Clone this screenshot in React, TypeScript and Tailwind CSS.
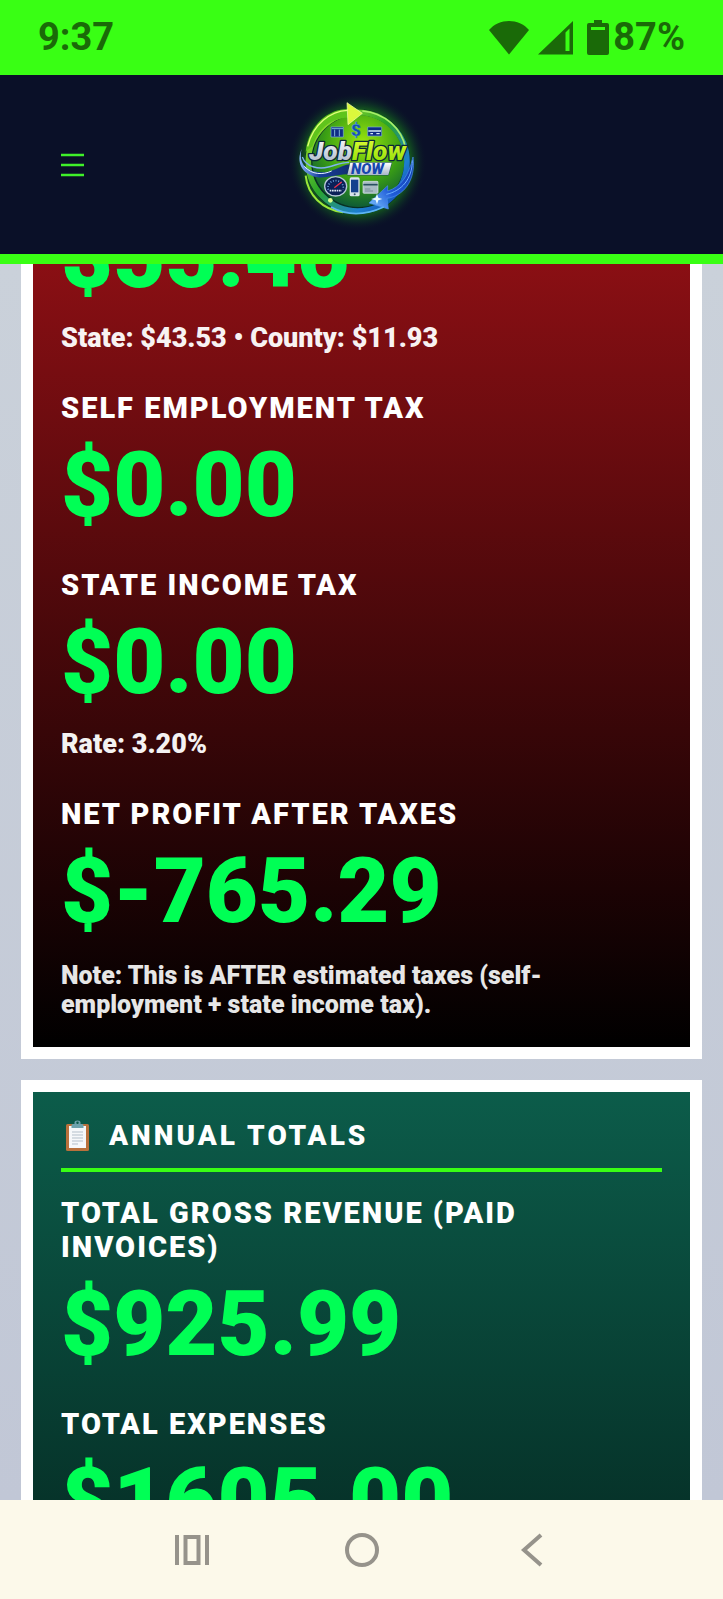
import type { ReactNode } from 'react';

type StatProps = {
  label?: string;
  value: string;
  children?: ReactNode;
};

const Stat = ({ label, value, children }: StatProps) => {
  return (
    <div>
      {label && <h3 className="mb-4 text-[29px] leading-[34px] tracking-[2px] uppercase">{label}</h3>}
      <p className="text-[90px] leading-[90px] text-[#00ff55]">{value}</p>
      {children}
    </div>
  );
};

const StatusBar = () => {
  return (
    <div className="flex h-[75px] shrink-0 items-center justify-between bg-[#39ff14] px-[38px] text-[38px] font-bold text-[#1a6a08]">
      <time>9:37</time>
      <div className="flex items-center">
        <svg className="mr-2 h-9 w-[42px]" viewBox="0 0 42 36" fill="currentColor" aria-hidden="true">
          <path d="M1 10C11-2 31-2 41 10L21 34.500Z" />
        </svg>
        <svg className="mr-3.5 h-9 w-[35px]" viewBox="0 0 35 36" aria-hidden="true">
          <path fill="currentColor" fillRule="evenodd" d="M0 34.500L35 1V34.500ZM27.500 12.500V31H31.500V8.500Z" />
        </svg>
        <svg className="mr-1 h-9 w-[22px]" viewBox="0 0 22 36" aria-hidden="true">
          <path
            fill="currentColor"
            fillRule="evenodd"
            d="M7 0H15V3H20Q22 3 22 5V33Q22 35 20 35H2Q0 35 0 33V5Q0 3 2 3H7ZM4 7V10H18V7Z"
          />
        </svg>
        <span>87%</span>
      </div>
    </div>
  );
};

const Logo = () => {
  return (
    <svg className="size-40" viewBox="4 0 480 480" role="img" aria-label="JobFlow Now">
      <defs>
        <radialGradient id="glow">
          <stop offset="0.7" stopColor="#1f9a12" stopOpacity="0.75" />
          <stop offset="0.85" stopColor="#126020" stopOpacity="0.35" />
          <stop offset="1" stopColor="#0a1028" stopOpacity="0" />
        </radialGradient>
        <radialGradient id="disc" cx="0.55" cy="0.3" r="0.75">
          <stop offset="0" stopColor="#9ae60c" />
          <stop offset="0.55" stopColor="#3ba014" />
          <stop offset="1" stopColor="#07503a" />
        </radialGradient>
        <linearGradient id="ring" x1="0" y1="0" x2="1" y2="1">
          <stop offset="0" stopColor="#b8f02a" />
          <stop offset="0.45" stopColor="#2aa52a" />
          <stop offset="0.75" stopColor="#1d7fd0" />
          <stop offset="1" stopColor="#1237a8" />
        </linearGradient>
        <linearGradient id="silver" x1="0" y1="0" x2="0" y2="1">
          <stop offset="0" stopColor="#ffffff" />
          <stop offset="1" stopColor="#a9b6c8" />
        </linearGradient>
        <linearGradient id="lime" x1="0" y1="0" x2="0" y2="1">
          <stop offset="0" stopColor="#e8ff3a" />
          <stop offset="1" stopColor="#86dc00" />
        </linearGradient>
        <linearGradient id="swoosh" x1="0" y1="0" x2="1" y2="0">
          <stop offset="0" stopColor="#8ab8ff" />
          <stop offset="0.4" stopColor="#173c9c" />
          <stop offset="1" stopColor="#123070" />
        </linearGradient>
        <linearGradient id="arrow" x1="1" y1="0" x2="0" y2="1">
          <stop offset="0" stopColor="#1038a8" />
          <stop offset="0.6" stopColor="#1f5cd8" />
          <stop offset="1" stopColor="#7ec4ff" />
        </linearGradient>
      </defs>
      <circle cx="234" cy="230" r="208" fill="url(#glow)" />
      <circle cx="234" cy="230" r="158" fill="#073022" />
      <circle cx="236" cy="228" r="138" fill="url(#disc)" />
      <circle cx="234" cy="230" r="148" fill="none" stroke="url(#ring)" strokeWidth="17" />
      <path d="M78 200C88 116 150 70 208 72L206 98C154 98 116 130 98 184Z" fill="#5fc41c" />
      <path d="M84 184C100 118 152 78 204 76" fill="none" stroke="#e2ff7a" strokeWidth="4" />
      <path d="M202 53L248 85L205 119Z" fill="#dcf93c" stroke="#f6ffb0" strokeWidth="2" />
      <path d="M248 78C316 84 366 130 378 190" fill="none" stroke="#a9ee6a" strokeWidth="5" />
      <path d="M78 272C84 330 128 374 190 382" fill="none" stroke="#9be83a" strokeWidth="6" />
      <circle cx="152" cy="346" r="7" fill="#dcff8c" />

      {/* top icons */}
      <g fill="#0e2c86" stroke="#7fb4d8" strokeWidth="2">
        <path d="M154 126H191V156H154Z" />
        <path d="M264 126H306V153H264Z" />
      </g>
      <path d="M165 134V154M179 134V154M156 131H190" stroke="#7fb4d8" strokeWidth="3" />
      <path d="M266 138H304M272 146H280M290 146H300" stroke="#d3e8f4" strokeWidth="4" />
      <text x="214" y="153" fontFamily="Roboto, sans-serif" fontWeight="900" fontSize="52" fill="#1450b4" stroke="#5aa8dc" strokeWidth="1">
        $
      </text>

      {/* wave behind the wordmark */}
      <path d="M66 192C54 240 86 264 136 262C164 260 184 240 210 238L204 268C160 270 136 282 110 276C68 268 48 232 66 192Z" fill="url(#swoosh)" />
      <path d="M68 216C78 246 118 254 146 246C170 240 184 232 208 232" fill="none" stroke="#7fb2f4" strokeWidth="4" />
      <path d="M74 244C96 270 130 270 156 258" fill="none" stroke="#e4f0ff" strokeWidth="3" />

      <g fontFamily="Roboto, sans-serif" fontWeight="900" fontStyle="italic" paintOrder="stroke" strokeLinejoin="round">
        <text x="88" y="224" fontSize="79" stroke="#0a2838" strokeWidth="8">
          <tspan fill="url(#silver)">Job</tspan>
          <tspan fill="url(#lime)">Flow</tspan>
        </text>
        <path d="M212 233H336L326 270H203Z" fill="url(#silver)" stroke="#12306e" strokeWidth="2" />
        <text x="214" y="267" fontSize="45" fill="#1747ae">
          NOW
        </text>
      </g>

      {/* blue arrow */}
      <path d="M400 216C410 290 368 334 322 340L326 372L268 354L324 302V318C364 306 388 270 400 216Z" fill="url(#arrow)" stroke="#4a90f0" strokeWidth="2" />
      <path d="M398 226C398 282 366 318 320 328" fill="none" stroke="#6cb0ff" strokeWidth="3" />
      <path d="M154 366C208 396 264 388 312 366" fill="none" stroke="#5db5f4" strokeWidth="5" />
      <path d="M292 326L296 338L308 342L296 346L292 358L288 346L274 342L288 338Z" fill="#e8fbff" />

      {/* gauge, phone, card */}
      <ellipse cx="168" cy="304" rx="33" ry="29" fill="#0b2158" stroke="#b8c8d8" strokeWidth="4" />
      <path d="M146 314A23 21 0 1 1 190 314" fill="none" stroke="#6c9ed8" strokeWidth="5" strokeDasharray="3 5" />
      <path d="M164 308L186 291" stroke="#f0304a" strokeWidth="4" />
      <path d="M150 317H186" stroke="#dce8f4" strokeWidth="5" strokeDasharray="5 2" />
      <rect x="210" y="277" width="30" height="57" rx="5" fill="#d8e2ea" />
      <rect x="214" y="284" width="22" height="38" fill="#15418e" />
      <circle cx="225" cy="328" r="3" fill="#3a5570" />
      <rect x="250" y="289" width="45" height="36" rx="3" fill="#a9bcc4" stroke="#e0eaf0" strokeWidth="2" />
      <path d="M251 299H294" stroke="#285060" strokeWidth="5" />
      <path d="M256 312H272M256 318H280" stroke="#5f7a84" strokeWidth="2" />
    </svg>
  );
};

const Header = () => {
  return (
    <header className="grid h-[189px] shrink-0 grid-cols-3 items-center border-b-10 border-[#39ff14] bg-[#0a1028] px-[61px]">
      <button type="button" aria-label="Open menu" className="justify-self-start text-[#3ff02a]">
        <svg className="h-6 w-6" viewBox="0 0 24 24" stroke="currentColor" strokeWidth="2.500" aria-hidden="true">
          <path d="M0 2H23M0 12H23M0 22H23" />
        </svg>
      </button>
      <a href="#home" className="justify-self-center">
        <Logo />
      </a>
    </header>
  );
};

const ClipboardIcon = () => {
  return (
    <svg className="h-8 w-8" viewBox="0 0 32 32" aria-hidden="true">
      <rect x="5" y="4" width="23" height="27" rx="1.500" fill="#b9713c" />
      <path d="M8 6H25V28H8Z" fill="#f6f8fa" />
      <path d="M11 12H22M11 15H22M11 18H22M11 21H22M11 24H17" stroke="#b3bfca" strokeWidth="1" />
      <path d="M10.500 8V5.500Q10.500 4 12 4H13.500V2.500Q13.500 0.500 16.500 0.500T19.500 2.500V4H21Q22.500 4 22.500 5.500V8Z" fill="#6fa3ad" />
      <circle cx="16.500" cy="2.800" r="1.200" fill="#0c5c4a" />
    </svg>
  );
};

const NavBar = () => {
  return (
    <nav className="grid h-[99px] shrink-0 grid-cols-[1fr_170px_170px_170px_1fr] place-items-center bg-[#fcf9ea] text-[#96938b]">
      <button type="button" aria-label="Recent apps" className="col-start-2">
        <svg className="h-10 w-[34px]" viewBox="0 0 34 40" fill="none" stroke="currentColor" strokeWidth="4" aria-hidden="true">
          <path d="M2 5V35M32 5V35M10.500 7H23.500V33H10.500Z" />
        </svg>
      </button>
      <button type="button" aria-label="Home">
        <svg className="h-10 w-[34px]" viewBox="0 0 34 40" fill="none" stroke="currentColor" strokeWidth="4" aria-hidden="true">
          <circle cx="17" cy="20" r="15" />
        </svg>
      </button>
      <button type="button" aria-label="Back">
        <svg className="h-10 w-[34px]" viewBox="0 0 34 40" fill="none" stroke="currentColor" strokeWidth="4" aria-hidden="true">
          <path d="M26 5L9 20L26 35" />
        </svg>
      </button>
    </nav>
  );
};

const App = () => {
  return (
    <div className="flex h-screen flex-col overflow-hidden font-['Roboto',sans-serif]">
      <StatusBar />
      <Header />
      <main className="flex min-h-0 flex-1 flex-col gap-[21px] overflow-hidden bg-linear-to-b/srgb from-[#cad1da] to-[#c1c7d6] px-[21px] font-black text-white">
        <section className="-mt-[52px] flex shrink-0 flex-col gap-[37px] border-12 border-t-0 border-white bg-linear-to-b/srgb from-[#931015] to-black px-7 pb-7">
          <Stat value="$55.46">
            <p className="mt-5 text-[27px] leading-8 opacity-95">State: $43.53 • County: $11.93</p>
          </Stat>
          <Stat label="Self Employment Tax" value="$0.00" />
          <Stat label="State Income Tax" value="$0.00">
            <p className="mt-5 text-[27px] leading-8 opacity-95">Rate: 3.20%</p>
          </Stat>
          <Stat label="Net Profit After Taxes" value="$-765.29">
            <p className="mt-6 max-w-[520px] text-[25px] leading-[29px] opacity-90">
              Note: This is AFTER estimated taxes (self-employment + state income tax).
            </p>
          </Stat>
        </section>

        <section className="flex shrink-0 flex-col gap-[37px] border-12 border-white bg-linear-to-b/srgb from-[#0c5c4a] to-[#052c24] p-7">
          <div>
            <h2 className="mb-6 flex items-center gap-4 border-b-4 border-[#39ff14] pb-4 text-[28px] leading-8 tracking-[3px] uppercase">
              <ClipboardIcon />
              Annual Totals
            </h2>
            <Stat label="Total Gross Revenue (Paid Invoices)" value="$925.99" />
          </div>
          <Stat label="Total Expenses" value="$1605.00" />
        </section>
      </main>
      <NavBar />
    </div>
  );
};

export default App;
